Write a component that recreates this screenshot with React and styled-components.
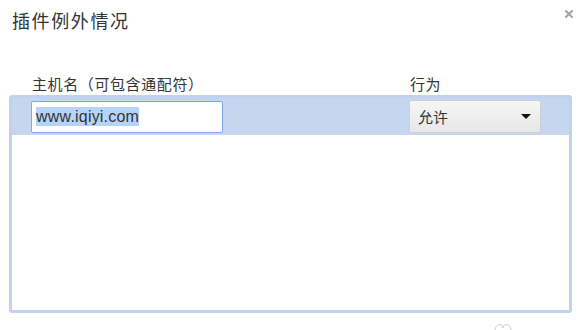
import React from "react";
import styled, { createGlobalStyle } from "styled-components";

const GlobalStyle = createGlobalStyle`
  html, body {
    margin: 0;
    padding: 0;
    background: #ffffff;
  }
  body {
    font-family: "Liberation Sans", "Noto Sans CJK SC", sans-serif;
    color: #333333;
  }
`;

const Dialog = styled.div`
  width: 582px;
  height: 330px;
  box-sizing: border-box;
  padding: 7px 9px 0 9px;
  position: relative;
  overflow: hidden;
`;

const TitleBar = styled.div`
  display: flex;
  justify-content: space-between;
  align-items: flex-start;
  height: 68px;
`;

const Title = styled.h1`
  margin: 0 0 0 3px;
  font-family: "Noto Sans CJK SC", sans-serif;
  font-weight: 400;
  font-size: 18px;
  line-height: 26px;
  color: #333333;
  letter-spacing: 1.6px;
`;

const Close = styled.svg`
  margin: 3px 0 0 0;
`;

const Columns = styled.div`
  display: grid;
  grid-template-columns: 378px 1fr;
  padding-left: 23px;
  height: 20px;
`;

const ColHead = styled.div`
  font-family: "Noto Sans CJK SC", sans-serif;
  font-size: 15px;
  line-height: 18px;
  color: #333333;
  letter-spacing: 0.6px;
`;

const ListBox = styled.div`
  width: 563px;
  height: 218px;
  box-sizing: border-box;
  border: 3px solid #bfd3ef;
  border-radius: 3px;
  background: #ffffff;
`;

const Row = styled.div`
  display: flex;
  align-items: center;
  height: 37px;
  padding: 0 28px 0 19px;
  box-sizing: border-box;
  background: ${({ $selected }) => ($selected ? "#c5d6ee" : "transparent")};
`;

const HostInput = styled.div`
  width: 192px;
  height: 32px;
  box-sizing: border-box;
  border: 1px solid #7eaaea;
  border-radius: 2px;
  background: #ffffff;
  display: flex;
  align-items: center;
  padding-left: 4px;
  font-size: 16px;
  letter-spacing: 0.2px;
  color: #333333;
`;

const Selected = styled.span`
  background: #b6d4f9;
  line-height: 19px;
`;

const Select = styled.div`
  margin-left: auto;
  width: 132px;
  height: 33px;
  box-sizing: border-box;
  border: 1px solid #cfcfcf;
  border-radius: 2px;
  background: linear-gradient(#f6f6f6, #e7e7e7);
  display: flex;
  align-items: center;
  justify-content: space-between;
  padding: 0 9px 0 8px;
  font-family: "Noto Sans CJK SC", sans-serif;
  font-size: 15px;
  color: #333333;
`;

const Caret = styled.span`
  width: 0;
  height: 0;
  border-left: 5px solid transparent;
  border-right: 5px solid transparent;
  border-top: 5px solid #111111;
`;

const Mark = styled.svg`
  position: absolute;
  left: 494px;
  top: 322px;
`;

export default function App() {
  return (
    <>
      <GlobalStyle />
      <Dialog>
        <TitleBar>
          <Title>插件例外情况</Title>
          <Close width="8" height="8" viewBox="0 0 8 8" aria-label="关闭">
            <path
              d="M1 1 L7 7 M7 1 L1 7"
              stroke="#a3a3a3"
              strokeWidth="2"
              strokeLinecap="square"
            />
          </Close>
        </TitleBar>
        <Columns>
          <ColHead>主机名（可包含通配符）</ColHead>
          <ColHead>行为</ColHead>
        </Columns>
        <ListBox>
          <Row $selected>
            <HostInput>
              <Selected>www.iqiyi.com</Selected>
            </HostInput>
            <Select>
              允许
              <Caret />
            </Select>
          </Row>
        </ListBox>
        {/* faint watermark at bottom edge */}
        <Mark width="20" height="10" viewBox="0 0 20 10">
          <path
            d="M1 9 C1 1 9 1 9 6 C9 1 17 1 17 9"
            fill="none"
            stroke="#cccccc"
            strokeWidth="1"
          />
        </Mark>
      </Dialog>
    </>
  );
}
